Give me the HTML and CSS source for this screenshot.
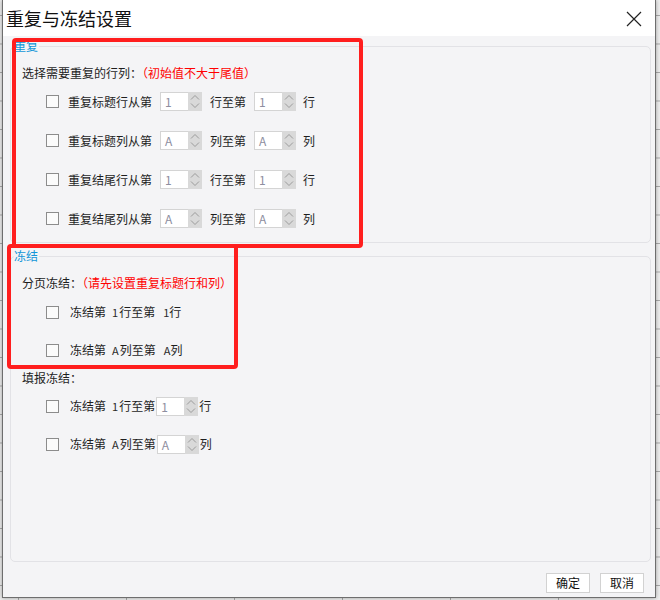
FILE: index.html
```html
<!DOCTYPE html>
<html lang="zh">
<head>
<meta charset="utf-8">
<title>重复与冻结设置</title>
<link rel="stylesheet" href="styles.css">
</head>
<body>
<div class="page">
  <div class="dialog">
    <div class="titlebar">
      <span class="title">重复与冻结设置</span>
      <svg class="close" width="16" height="16" viewBox="0 0 16 16"><path d="M1 1 L15 15 M15 1 L1 15" stroke="#222" stroke-width="1.2" fill="none"/></svg>
    </div>
    <div class="content">
      <div class="group group-repeat">
        <span class="legend">重复</span>
        <div class="header h-first">选择需要重复的行列：<span class="warn">（初始值不大于尾值）</span></div>
        <div class="row">
          <span class="check"></span><span class="label">重复标题行从第</span>
          <span class="spin"><span class="val">1</span><span class="arrows"><svg width="14" height="19" viewBox="0 0 14 19"><path d="M3 7.5 L7 3.5 L11 7.5 M3 11.5 L7 15.5 L11 11.5" stroke="#9c9c9c" stroke-width="1" fill="none"/></svg></span></span>
          <span class="label mid">行至第</span>
          <span class="spin"><span class="val">1</span><span class="arrows"><svg width="14" height="19" viewBox="0 0 14 19"><path d="M3 7.5 L7 3.5 L11 7.5 M3 11.5 L7 15.5 L11 11.5" stroke="#9c9c9c" stroke-width="1" fill="none"/></svg></span></span>
          <span class="label end">行</span>
        </div>
        <div class="row">
          <span class="check"></span><span class="label">重复标题列从第</span>
          <span class="spin"><span class="val">A</span><span class="arrows"><svg width="14" height="19" viewBox="0 0 14 19"><path d="M3 7.5 L7 3.5 L11 7.5 M3 11.5 L7 15.5 L11 11.5" stroke="#9c9c9c" stroke-width="1" fill="none"/></svg></span></span>
          <span class="label mid">列至第</span>
          <span class="spin"><span class="val">A</span><span class="arrows"><svg width="14" height="19" viewBox="0 0 14 19"><path d="M3 7.5 L7 3.5 L11 7.5 M3 11.5 L7 15.5 L11 11.5" stroke="#9c9c9c" stroke-width="1" fill="none"/></svg></span></span>
          <span class="label end">列</span>
        </div>
        <div class="row">
          <span class="check"></span><span class="label">重复结尾行从第</span>
          <span class="spin"><span class="val">1</span><span class="arrows"><svg width="14" height="19" viewBox="0 0 14 19"><path d="M3 7.5 L7 3.5 L11 7.5 M3 11.5 L7 15.5 L11 11.5" stroke="#9c9c9c" stroke-width="1" fill="none"/></svg></span></span>
          <span class="label mid">行至第</span>
          <span class="spin"><span class="val">1</span><span class="arrows"><svg width="14" height="19" viewBox="0 0 14 19"><path d="M3 7.5 L7 3.5 L11 7.5 M3 11.5 L7 15.5 L11 11.5" stroke="#9c9c9c" stroke-width="1" fill="none"/></svg></span></span>
          <span class="label end">行</span>
        </div>
        <div class="row">
          <span class="check"></span><span class="label">重复结尾列从第</span>
          <span class="spin"><span class="val">A</span><span class="arrows"><svg width="14" height="19" viewBox="0 0 14 19"><path d="M3 7.5 L7 3.5 L11 7.5 M3 11.5 L7 15.5 L11 11.5" stroke="#9c9c9c" stroke-width="1" fill="none"/></svg></span></span>
          <span class="label mid">列至第</span>
          <span class="spin"><span class="val">A</span><span class="arrows"><svg width="14" height="19" viewBox="0 0 14 19"><path d="M3 7.5 L7 3.5 L11 7.5 M3 11.5 L7 15.5 L11 11.5" stroke="#9c9c9c" stroke-width="1" fill="none"/></svg></span></span>
          <span class="label end">列</span>
        </div>
      </div>

      <div class="group group-freeze">
        <span class="legend">冻结</span>
        <div class="header h-first">分页冻结：<span class="warn">（请先设置重复标题行和列）</span></div>
        <div class="row frow">
          <span class="check"></span><span class="label">冻结第</span><span class="num n1">1</span><span class="label">行至第</span><span class="num n2">1</span><span class="label">行</span>
        </div>
        <div class="row frow">
          <span class="check"></span><span class="label">冻结第</span><span class="num n1">A</span><span class="label">列至第</span><span class="num n2">A</span><span class="label">列</span>
        </div>
        <div class="header h-second">填报冻结：</div>
        <div class="row frow">
          <span class="check"></span><span class="label">冻结第</span><span class="num n1">1</span><span class="label">行至第</span>
          <span class="spin tight"><span class="val">1</span><span class="arrows"><svg width="14" height="19" viewBox="0 0 14 19"><path d="M3 7.5 L7 3.5 L11 7.5 M3 11.5 L7 15.5 L11 11.5" stroke="#9c9c9c" stroke-width="1" fill="none"/></svg></span></span>
          <span class="label">行</span>
        </div>
        <div class="row frow">
          <span class="check"></span><span class="label">冻结第</span><span class="num n1">A</span><span class="label">列至第</span>
          <span class="spin tight"><span class="val">A</span><span class="arrows"><svg width="14" height="19" viewBox="0 0 14 19"><path d="M3 7.5 L7 3.5 L11 7.5 M3 11.5 L7 15.5 L11 11.5" stroke="#9c9c9c" stroke-width="1" fill="none"/></svg></span></span>
          <span class="label">列</span>
        </div>
      </div>
    </div>
    <div class="footer">
      <button class="btn">确定</button>
      <button class="btn">取消</button>
    </div>
  </div>
  <div class="mark mark-1"></div>
  <div class="mark mark-2"></div>
</div>
</body>
</html>
```

FILE: styles.css
```css
html, body {
  margin: 0;
  padding: 0;
}
body {
  width: 660px;
  height: 600px;
  overflow: hidden;
  background-color: #ededed;
  background-image:
    linear-gradient(to right, #a8a8a8 1px, transparent 1px),
    linear-gradient(to bottom, #a8a8a8 1px, transparent 1px);
  background-size: 108px 28.5px, 108px 28.5px;
  background-position: 18px 0, 0 15px;
  font-family: "Noto Sans CJK SC", "Noto Sans", sans-serif;
  font-size: 12px;
  color: #1e1e1e;
}
.page {
  position: relative;
  width: 660px;
  height: 600px;
}
.dialog {
  margin-left: 2px;
  width: 654px;
  height: 598px;
  box-sizing: border-box;
  border-left: 1px solid #6e6e6e;
  border-right: 1px solid #6e6e6e;
  border-bottom: 1px solid #6e6e6e;
  background: #f4f4f6;
  box-shadow: 0 0 4px rgba(0, 0, 0, 0.35);
  display: flex;
  flex-direction: column;
}
.titlebar {
  height: 36px;
  flex: none;
  background: #ffffff;
  display: flex;
  align-items: center;
  justify-content: space-between;
  padding: 0 13px 0 3px;
}
.title {
  font-size: 18px;
  line-height: 36px;
  color: #111;
}
.close {
  display: block;
  margin-top: 1px;
}
.content {
  flex: 1;
  display: flex;
  flex-direction: column;
  padding: 0 4px 0 7px;
}
.group {
  position: relative;
  border: 1px solid #e2e2e6;
  border-radius: 5px;
  padding: 16px 0 4px 11px;
}
.group-repeat {
  margin-top: 10px;
}
.group-freeze {
  margin-top: 13px;
  flex: 1;
}
.legend {
  position: absolute;
  top: -9px;
  left: 3px;
  line-height: 16px;
  padding: 0 1px 0 0;
  background: #f4f4f6;
  color: #1296d8;
}
.header {
  line-height: 20px;
  height: 20px;
}
.group-repeat .header {
  height: 19px;
}
.h-second {
  height: 19px;
  margin-top: -1px;
}
.warn {
  color: #ff0000;
}
.row {
  display: flex;
  align-items: center;
  height: 39px;
  padding-left: 24px;
}
.frow {
  height: 38px;
}
.check {
  width: 11px;
  height: 11px;
  border: 1px solid #8c8c8c;
  background: #fbfbfb;
  margin-right: 9px;
  flex: none;
}
.frow .check {
  margin-right: 11px;
}
.label {
  line-height: 20px;
  white-space: nowrap;
}
.mid {
  margin-left: 8px;
}
.end {
  margin-left: 7px;
}
.spin {
  display: flex;
  height: 19px;
  margin-left: 8px;
  flex: none;
}
.spin.tight {
  margin-left: 1px;
  margin-right: 1px;
}
.val {
  width: 23px;
  height: 17px;
  border: 1px solid #d4d4d4;
  border-right: none;
  background: #ffffff;
  padding-left: 4px;
  line-height: 17px;
  color: #8e8ea0;
}
.arrows {
  width: 14px;
  height: 19px;
  background: #d9d9d9;
}
.arrows svg {
  display: block;
}
.num {
  font-size: 11px;
  line-height: 20px;
  color: #2a2a2a;
}
.n1 {
  margin-left: 6px;
  margin-right: 1px;
}
.n2 {
  margin-left: 8px;
  margin-right: 0;
}
.footer {
  flex: none;
  display: flex;
  justify-content: flex-end;
  gap: 10px;
  padding: 11px 11px 4px 0;
}
.btn {
  width: 44px;
  height: 20px;
  padding: 0;
  margin: 0;
  border: 1px solid #d2d2d2;
  background: #ffffff;
  font-family: "Noto Sans CJK SC", "Noto Sans", sans-serif;
  font-size: 12px;
  line-height: 18px;
  color: #111;
}
.mark {
  position: absolute;
  border: 4px solid #ff1e1e;
  border-radius: 4px;
  box-sizing: border-box;
}
.mark-1 {
  left: 12px;
  top: 38px;
  width: 351px;
  height: 210px;
}
.mark-2 {
  left: 7px;
  top: 244px;
  width: 231px;
  height: 125px;
}
```
